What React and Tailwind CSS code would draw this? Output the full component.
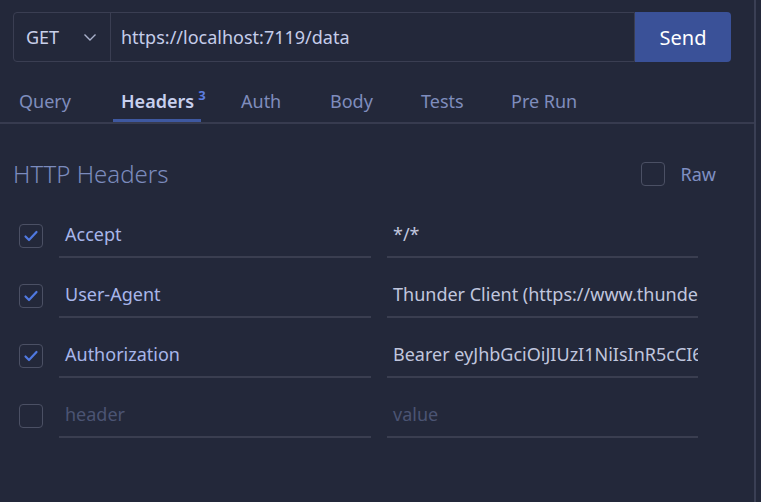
import { useState } from "react";

const tabs = [
  { name: "Query", w: "w-[102px]" },
  { name: "Headers", w: "w-[120px]" },
  { name: "Auth", w: "w-[89px]" },
  { name: "Body", w: "w-[91px]" },
  { name: "Tests", w: "w-[90px]" },
  { name: "Pre Run", w: "w-[90px]" },
];

const rows = [
  { key: "Accept", value: "*/*", on: true },
  { key: "User-Agent", value: "Thunder Client (https://www.thunderclient.com)", on: true },
  { key: "Authorization", value: "Bearer eyJhbGciOiJIUzI1NiIsInR5cCI6IkpXVCJ9", on: true },
];

function Check({ on }) {
  return (
    <div className="w-6 h-6 rounded-[4px] border border-[#4b5064] flex items-center justify-center shrink-0">
      {on && (
        <svg width="16" height="16" viewBox="0 0 16 16" fill="none">
          <path d="M2.5 8.5 L6 12 L13.5 4" stroke="#4f78e0" strokeWidth="2.2" strokeLinecap="round" strokeLinejoin="round" />
        </svg>
      )}
    </div>
  );
}

export default function App() {
  const [active] = useState("Headers");

  return (
    <div
      className="w-[761px] h-[502px] bg-[#23283a] overflow-hidden flex"
      style={{ fontFamily: '"Noto Sans", "Open Sans", sans-serif' }}
    >
      <div className="w-[756px] h-full border-r-2 border-[#3a3f54] flex flex-col">
        {/* url bar */}
        <div className="flex pt-3 pl-[13px] pr-[23px]">
          <div className="flex flex-1 h-[50px] border border-[#3a3e52] rounded-l-[4px]">
            <div className="w-[97px] flex items-center justify-between pl-3 pr-3 border-r border-[#3a3e52]">
              <span className="text-[18px] text-[#c9d0ea]">GET</span>
              <svg width="16" height="16" viewBox="0 0 16 16" fill="none">
                <path d="M2.5 5.5 L8 11 L13.5 5.5" stroke="#aab2cc" strokeWidth="1.4" />
              </svg>
            </div>
            <div className="flex-1 flex items-center pl-[10px] text-[18px] text-[#c5cdea]">
              https://localhost:7119/data
            </div>
          </div>
          <button className="w-[96px] h-[50px] bg-[#3a5198] rounded-r-[4px] text-white text-[20px] pt-[2px]">
            Send
          </button>
        </div>

        {/* tabs */}
        <div className="mt-[10px] flex pl-[19px] border-b-2 border-[#373b4f] h-[52px]">
          {tabs.map((t) => (
            <div key={t.name} className={`${t.w} shrink-0 flex`}>
              {t.name === active ? (
                <div className="-ml-2 w-[88px] pl-2 border-b-[3px] border-[#3e58a0] text-[#c8d0ee] font-semibold text-[18px] pt-[16px] whitespace-nowrap">
                  {t.name}
                  <sup className="text-[13px] text-[#5b7de0] font-bold ml-[4px] -top-[8px] relative">3</sup>
                </div>
              ) : (
                <div className="text-[#7f8dbd] text-[18px] pt-[16px] whitespace-nowrap">{t.name}</div>
              )}
            </div>
          ))}
        </div>

        {/* section */}
        <div className="flex items-center justify-between pl-[13px] pr-[38px] mt-[32px]">
          <h2 className="text-[24px] font-light text-[#7b8bbd]">HTTP Headers</h2>
          <div className="flex items-center gap-[16px]">
            <Check on={false} />
            <span className="text-[18px] text-[#7f8fc2]">Raw</span>
          </div>
        </div>

        <div className="flex flex-col mt-[14px] pl-[19px]">
          {[...rows, { key: "", value: "", on: false }].map((r, i) => (
            <div key={i} className="flex items-center h-[60px]">
              <Check on={r.on} />
              <div className="ml-4 w-[312px] h-[43px] border-b-2 border-[#3a3e50] flex items-center pl-[6px] pb-[2px] text-[18px] whitespace-nowrap overflow-hidden">
                {r.key ? <span className="text-[#a8b6ea]">{r.key}</span> : <span className="text-[#4b5473]">header</span>}
              </div>
              <div className="ml-4 w-[311px] h-[43px] border-b-2 border-[#3a3e50] flex items-center pl-[6px] pb-[2px] text-[18px] whitespace-nowrap overflow-hidden">
                {r.value ? <span className="text-[#c0c6de]">{r.value}</span> : <span className="text-[#4b5473]">value</span>}
              </div>
            </div>
          ))}
        </div>
      </div>
    </div>
  );
}
